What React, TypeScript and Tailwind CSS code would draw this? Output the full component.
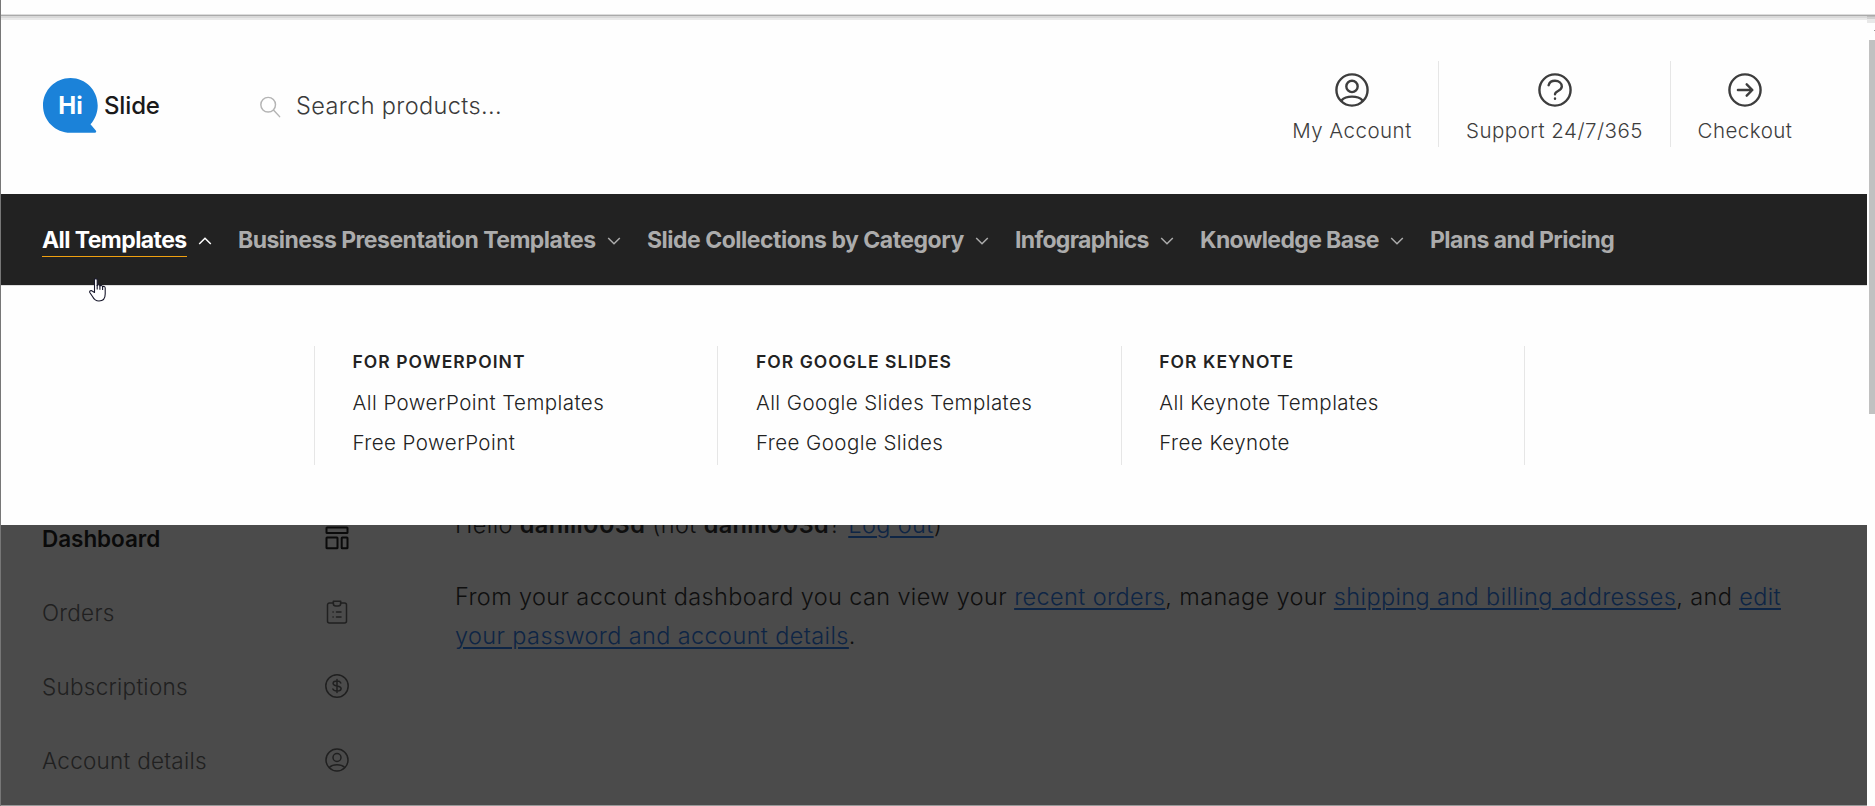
import type { ReactNode } from "react";

function Outline({ className, stroke, children }: { className: string; stroke: number; children: ReactNode }) {
  return (
    <svg
      viewBox="0 0 24 24"
      fill="none"
      stroke="currentColor"
      strokeWidth={stroke}
      strokeLinecap="round"
      strokeLinejoin="round"
      className={className}
    >
      {children}
    </svg>
  );
}

const userPaths = (
  <>
    <circle cx="12" cy="12" r="11" />
    <circle cx="12" cy="9.5" r="4" />
    <path d="M4.6 19.3c1.7-1.8 4.4-2.6 7.4-2.6s5.7.8 7.4 2.6" />
  </>
);

const actions = [
  { label: "My Account", width: "w-[173px]", icon: userPaths },
  {
    label: "Support 24/7/365",
    width: "w-[232px]",
    icon: (
      <>
        <circle cx="12" cy="12" r="11" />
        <path d="M7.500 8.600C8 6.700 9.800 5.500 12 5.500c2.700 0 4.800 1.700 4.800 4.100 0 3.200-4.800 2.900-4.800 5.400" />
        <path d="M12 18v.2" />
      </>
    ),
  },
  {
    label: "Checkout",
    width: "w-[148px]",
    icon: (
      <>
        <circle cx="12" cy="12" r="11" />
        <path d="M7 12h10M13.200 8l4 4-4 4" />
      </>
    ),
  },
];

const navItems = [
  { label: "Business Presentation Templates", width: "w-[409px]", tracking: "tracking-[-0.520px]" },
  { label: "Slide Collections by Category", width: "w-[368px]", tracking: "tracking-[-0.500px]" },
  { label: "Infographics", width: "w-[185px]", tracking: "tracking-[-0.680px]" },
  { label: "Knowledge Base", width: "w-[230px]", tracking: "tracking-[-0.620px]" },
];

const columns = [
  { title: "For PowerPoint", links: ["All PowerPoint Templates", "Free PowerPoint"] },
  { title: "For Google Slides", links: ["All Google Slides Templates", "Free Google Slides"] },
  { title: "For Keynote", links: ["All Keynote Templates", "Free Keynote"] },
];

const sidebar = [
  {
    label: "Dashboard",
    active: true,
    icon: (
      <>
        <rect x="1.500" y="1.500" width="21" height="5.500" rx="0.600" />
        <rect x="1.500" y="11.500" width="11" height="10.800" rx="0.600" />
        <rect x="16.700" y="11.500" width="5.800" height="10.800" rx="0.600" />
      </>
    ),
  },
  {
    label: "Orders",
    active: false,
    icon: (
      <>
        <path d="M8.500 3H4.500a2 2 0 0 0-2 2v16a2 2 0 0 0 2 2h15a2 2 0 0 0 2-2V5a2 2 0 0 0-2-2h-4" />
        <path d="M8.300 1.200h7.400v2.300a2.500 2.500 0 0 1-2.500 2.500h-2.400a2.500 2.500 0 0 1-2.500-2.500z" />
        <path d="M8 12h.2M11.500 12H16M8 17h.2M11.500 17H16" />
      </>
    ),
  },
  {
    label: "Subscriptions",
    active: false,
    icon: (
      <>
        <circle cx="12" cy="12" r="11.200" />
        <path d="M12 5.500v13M15.800 9c-.5-1.200-2-1.900-3.800-1.900-2.300 0-3.900 1-3.900 2.500 0 3.400 8 1.400 8 4.900 0 1.500-1.700 2.500-4.100 2.500-2 0-3.600-.8-4.100-2" />
      </>
    ),
  },
  { label: "Account details", active: false, icon: userPaths },
];

function Chevron({ up = false }: { up?: boolean }) {
  return (
    <svg viewBox="0 0 14 8" fill="none" stroke="currentColor" strokeWidth="1.500" className={up ? "mt-0.5 h-2 w-3.5" : "mt-[3px] h-2 w-3.5"}>
      <path d={up ? "M1.200 7 7 1.200 12.800 7" : "M1.200 1 7 6.800 12.800 1"} />
    </svg>
  );
}

function Logo() {
  return (
    <a className="mt-[3px] flex w-[216px] items-center">
      <span className="relative flex h-[55px] w-[55px] items-center justify-center">
        <svg viewBox="0 0 55 55" className="absolute inset-0 h-full w-full">
          <path
            fill="#1b82d9"
            d="M27.500 0C42.700 0 54.700 12.300 54.700 27.500c0 7.200-2.700 13.900-7.200 18.800l5.300 6.300c.8 1 .4 2.200-.9 2.200H27.500C12.300 54.800 0 42.700 0 27.500S12.300 0 27.500 0z"
          />
        </svg>
        <span className="relative text-[24px] leading-none font-bold text-white">Hi</span>
      </span>
      <span className="ml-1.5 text-[24px] font-medium tracking-[-0.150px] text-[#1a1a1a]">Slide</span>
    </a>
  );
}

function Link({ children }: { children: ReactNode }) {
  return <a className="text-[#0e2545] underline decoration-2 underline-offset-[3px]">{children}</a>;
}

export default function App() {
  return (
    <div className="relative flex h-[806px] w-[1875px] overflow-hidden bg-[#fefefe] font-[Inter,sans-serif]">
      <div className="flex w-[1867px] flex-col border-l border-[#777]">
        <div className="h-3.5" />
        <div className="h-px bg-[#dcdcdc]" />
        <div className="h-px bg-[#aaa]" />
        <div className="h-0.5 bg-[#d9d9d9]" />
        <div className="h-0.5 bg-[#e9e9e9]" />

        <header className="flex h-[174px] items-center pr-12 pb-1.5 pl-[42px]">
          <Logo />
          <div className="mt-[3px] flex items-center gap-[15px] text-[#b4b4b4]">
            <Outline className="mt-0.5 h-[22px] w-[22px]" stroke={1.6}>
              <circle cx="10" cy="9.500" r="8" />
              <path d="M16 15.500 22.500 22.500" />
            </Outline>
            <span className="text-[23.500px] font-light tracking-[0.370px] text-[#3a3a3a]">Search products...</span>
          </div>
          <div className="ml-auto flex h-[86px] divide-x divide-[#e6e6e6] text-[#3d3d3d]">
            {actions.map((a) => (
              <a key={a.label} className={`flex flex-col items-center pt-3 ${a.width}`}>
                <Outline className="h-[34px] w-[34px]" stroke={1.7}>
                  {a.icon}
                </Outline>
                <span className="mt-2.5 text-[20.500px] leading-7 font-light tracking-[0.480px]">{a.label}</span>
              </a>
            ))}
          </div>
        </header>

        <nav className="flex h-[91px] bg-[#222] pl-[41px] text-[23px] leading-8 font-bold tracking-[-0.580px] whitespace-nowrap text-[#acacac]">
          <a className="flex h-[92px] w-[196px] items-center justify-start gap-[11px] text-white">
            <span className="mt-[1px] border-b border-[#f0a010]">All Templates</span>
            <Chevron up />
          </a>
          {navItems.map((n) => (
            <a key={n.label} className={`flex h-[91px] items-center gap-[11.500px] ${n.width} ${n.tracking}`}>
              <span>{n.label}</span>
              <Chevron />
            </a>
          ))}
          <a className="flex h-[91px] items-center">Plans and Pricing</a>
        </nav>

        <div className="flex h-60 border-t border-[#ddd] pt-[60px] pl-[313px]">
          {columns.map((c) => (
            <div key={c.title} className="flex h-[119px] w-[403.400px] flex-col border-l border-[#e6e6e6] pl-[37.500px] text-[#222]">
              <h3 className="pt-1 text-[17.500px] leading-6 font-semibold tracking-[1.050px] uppercase">{c.title}</h3>
              <div className="mt-[9px] flex flex-col text-[20.500px] leading-10 font-light tracking-[0.440px]">
                {c.links.map((l) => (
                  <a key={l}>{l}</a>
                ))}
              </div>
            </div>
          ))}
          <div className="h-[119px] border-l border-[#e6e6e6]" />
        </div>

        <div className="flex h-[280px] overflow-hidden bg-[#4b4b4b]">
          <aside className="-mt-6 w-[348px] pl-[41px]">
            {sidebar.map((s) => (
              <a
                key={s.label}
                className={`flex h-[74px] items-center justify-between text-[22.500px] ${
                  s.active ? "font-semibold tracking-[-0.050px] text-[#0a0a0a]" : "font-light tracking-[0.260px] text-[#202020]"
                }`}
              >
                <span className="mt-0.5">{s.label}</span>
                <Outline className="h-6 w-6" stroke={s.active ? 2 : 1.5}>
                  {s.icon}
                </Outline>
              </a>
            ))}
          </aside>
          <main className="-mt-5 ml-[106px] flex w-[1345px] flex-col gap-[33px] text-[23.500px] leading-[39px] font-light tracking-[0.380px] text-[#0f0f0f]">
            <p>
              Hello <strong className="font-semibold">danill003d</strong> (not <strong className="font-semibold">danill003d</strong>?{" "}
              <Link>Log out</Link>)
            </p>
            <p>
              From your account dashboard you can view your <Link>recent orders</Link>, manage your{" "}
              <Link>shipping and billing addresses</Link>, and <Link>edit your password and account details</Link>.
            </p>
          </main>
        </div>
        <div className="h-px bg-[#999]" />
      </div>

      <div className="flex w-2 flex-col">
        <div className="h-3.5" />
        <div className="h-px bg-[#dcdcdc]" />
        <div className="h-px bg-[#aaa]" />
        <div className="h-px bg-[#bdbdbd]" />
        <div className="h-0.5 bg-[#d0d0d0]" />
        <div className="h-1 bg-[#e8e8e8]" />
        <div className="mt-[7px] h-px w-px self-end bg-[#999]" />
        <div className="mt-[9px] h-[374px] w-1.5 self-end bg-[#c1c1c1]" />
      </div>

      <svg viewBox="0 0 18 24" className="absolute top-[278px] left-[89px] h-6 w-[18px]">
        <path
          fill="#fff"
          stroke="#16162a"
          strokeWidth="1.100"
          strokeLinejoin="round"
          d="M5.500 14.500V2c0-1.800 2.700-1.800 2.700 0v5.500c.3-1.200 2.500-1 2.700.5.500-1 2.500-.7 2.700.9.600-.9 2.600-.4 2.600 1.100v6c0 4-2 7-6.200 7-3.500 0-5-1.500-6.500-4.500L.8 14.500c-.6-1.800 1.400-2.500 2.700-1.300z"
        />
        <path stroke="#16162a" strokeWidth="1.100" d="M8.200 7v4.500M10.900 8v3.800M13.600 9v3" />
      </svg>
    </div>
  );
}
